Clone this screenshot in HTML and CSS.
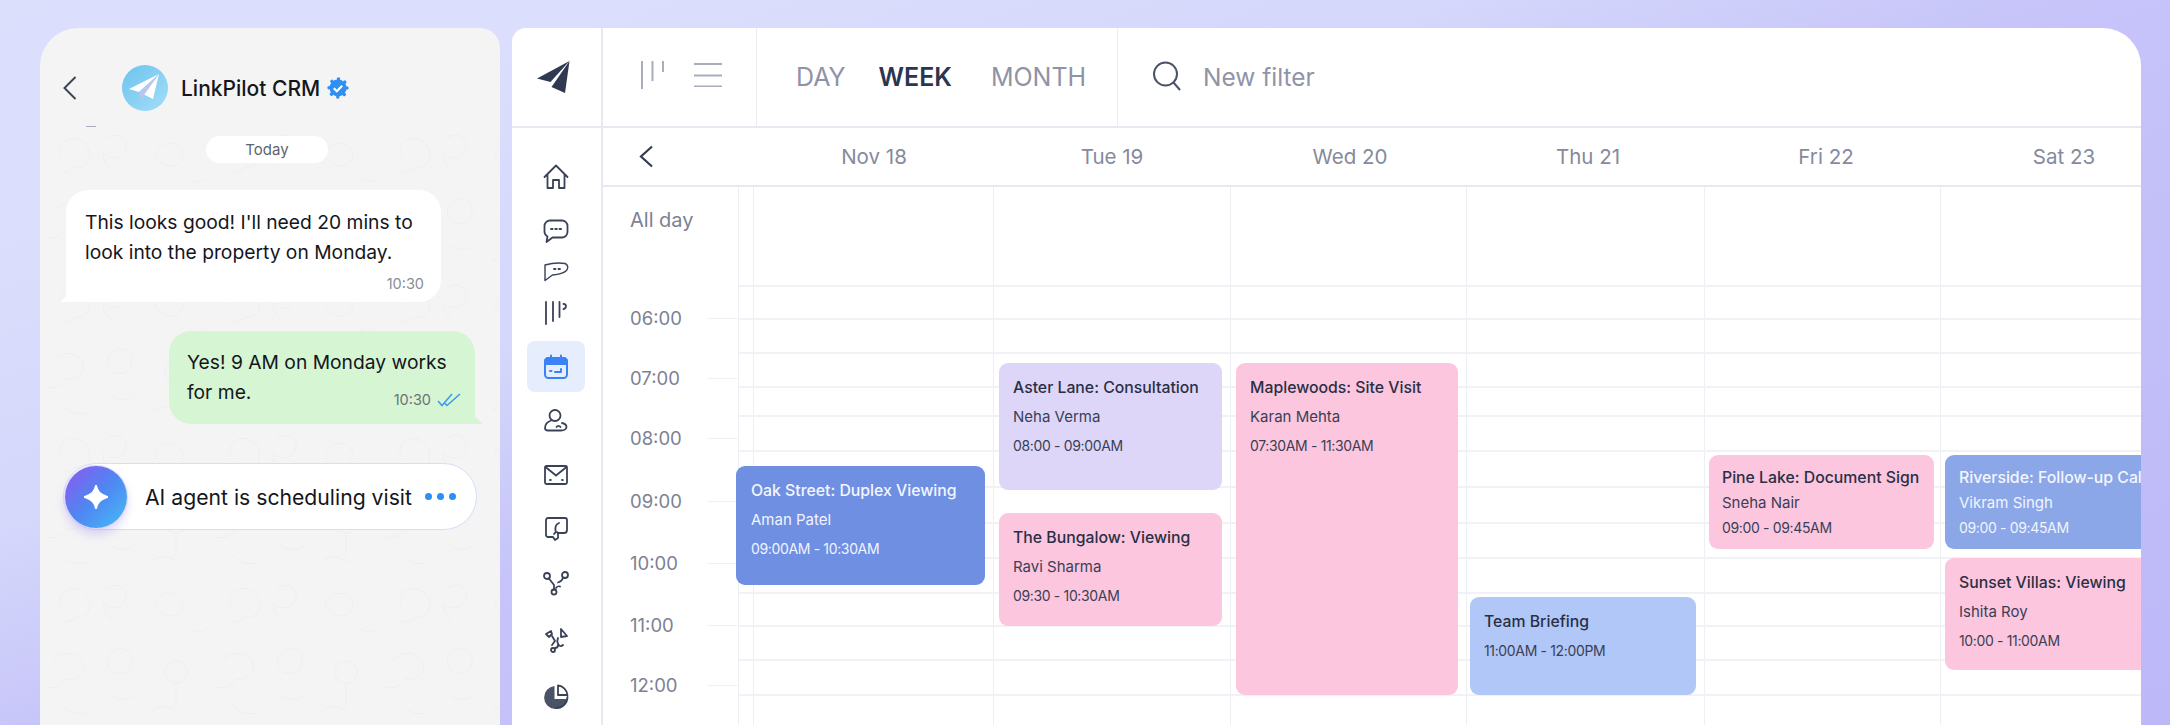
FILE: index.html
```html
<!DOCTYPE html>
<html lang="en">
<head>
    <meta charset="UTF-8">
    <meta name="viewport" content="width=device-width, initial-scale=1.0">
    <title>LinkPilot CRM Calendar</title>
    <link rel="stylesheet" href="styles.css">
</head>
<body>
    <div class="page">
        <!-- chat panel -->
        <section class="chat">
            <svg class="doodles" width="460" height="598" aria-hidden="true">
                <defs>
                    <pattern id="doodle" width="170" height="150" patternUnits="userSpaceOnUse">
                        <g fill="none" stroke="#eeeef0" stroke-width="1">
                            <path d="M22 30c-8-12 8-24 20-16s10 26-4 26c-6 0-10 8-16 4"/>
                            <path d="M66 12c10-8 22-2 20 9s-16 13-22 5c-2 6 2 14 8 16"/>
                            <path d="M118 22c6-8 20-8 24 2s-8 18-16 14-14-8-8-16zM150 52c6 4 12 4 16 0"/>
                            <path d="M12 84c8-10 24-10 30 0s-4 20-16 18c-6 8-12 10-20 8"/>
                            <path d="M74 74c8-6 20 0 18 10s-6 14-16 12-12-16-2-22zM70 118c8 6 18 6 24 0"/>
                            <path d="M126 90c4-8 16-8 20 0s-2 16-10 16-14-8-10-16zM136 106v22"/>
                            <path d="M22 128c8 8 14 10 24 8M112 134c8-6 18-6 26 2"/>
                        </g>
                    </pattern>
                </defs>
                <rect width="460" height="598" fill="url(#doodle)"/>
            </svg>

            <header class="chat-head">
                <svg class="chat-back" width="14" height="24" viewBox="0 0 14 24"><path d="M12.500 1L1.500 12l11 11" fill="none" stroke="#3d4456" stroke-width="2"/></svg>
                <svg class="avatar" width="46" height="46" viewBox="0 0 46 46">
                    <defs>
                        <linearGradient id="av" x1="0" y1="0" x2="1" y2="1">
                            <stop offset="0" stop-color="#6cc3ee"/>
                            <stop offset="1" stop-color="#a4def8"/>
                        </linearGradient>
                    </defs>
                    <circle cx="23" cy="23" r="23" fill="url(#av)"/>
                    <path d="M37 9L7 24l10 3z" fill="#fff"/>
                    <path d="M37 9L21 29l10 5z" fill="#fff"/>
                    <path d="M37 9L17 27l3 9 2-6z" fill="#b9c6ee"/>
                </svg>
                <span class="chat-name">LinkPilot CRM</span>
                <svg class="verified" width="22" height="22" viewBox="0 0 22 22">
                    <circle cx="11" cy="11" r="8.500" fill="#2e90f5"/>
                    <circle cx="11" cy="11" r="9" fill="none" stroke="#2e90f5" stroke-width="3.400" stroke-linecap="round" stroke-dasharray="0.1 7"/>
                    <path d="M6.800 11.300l3 3 5.400-5.600" fill="none" stroke="#fff" stroke-width="2.200"/>
                </svg>
            </header>

            <div class="messages">
                <div class="today">Today</div>

                <div class="bubble in">
                    <p>This looks good! I'll need 20 mins to look into the property on Monday.</p>
                    <div class="stamp">10:30</div>
                </div>

                <div class="bubble out">
                    <p>Yes! 9 AM on Monday works for me.</p>
                    <div class="stamp">
                        10:30
                        <svg width="24" height="14" viewBox="0 0 24 14"><path d="M1 8l4 4.500L15 1M8 10.500l2 2L23 1" fill="none" stroke="#3d9bf0" stroke-width="1.600"/></svg>
                    </div>
                </div>

                <div class="agent">
                    <div class="agent-orb">
                        <svg width="24" height="24" viewBox="0 0 24 24"><path d="M12 0c1.500 6.500 4 9.500 12 12-8 2.500-10.500 5.500-12 12-1.500-6.500-4-9.500-12-12 8-2.500 10.500-5.500 12-12z" fill="#fff" stroke="#fff" stroke-width="1.500" stroke-linejoin="round"/></svg>
                    </div>
                    <span class="agent-text">AI agent is scheduling visit</span>
                    <div class="dots"><i></i><i></i><i></i></div>
                </div>
            </div>
        </section>

        <!-- calendar panel -->
        <section class="main">
            <aside class="rail">
                <div class="logo">
                    <svg width="33" height="32" viewBox="0 0 33 32"><path d="M32.500 0L0 17.500l13.500 3.500z" fill="#2f3a52"/><path d="M32.500 0L14.500 26l13.500 6z" fill="#2f3a52"/></svg>
                </div>
                <nav class="nav">
                    <a class="nav-item">
                        <svg width="26" height="26" viewBox="0 0 26 26"><path d="M1.500 13L13 1.500 24.500 13M4.500 10.500V24H10v-8h6v8h5.500V10.500"/></svg>
                    </a>
                    <a class="nav-item">
                        <svg width="26" height="26" viewBox="0 0 26 26"><path d="M7 2.500h12a5.500 5.500 0 0 1 5.500 5.500v6a5.500 5.500 0 0 1-5.500 5.500H9.500L3.500 24l1-5.500A5.500 5.500 0 0 1 1.500 14V8A5.500 5.500 0 0 1 7 2.500z"/><path class="dot" d="M8 11h1.600M12.300 11h1.600M16.500 11h1.600"/></svg>
                    </a>
                    <a class="nav-item short">
                        <svg width="26" height="20" viewBox="0 0 26 20"><path class="thin" d="M2 3c7-2 14-2.500 20-1.500 3 1 3.500 4.500 1.500 7-3 3-9 4-14 4.500L2 18.500z"/><path class="dot" d="M11 7h1.500M15.500 7H17"/></svg>
                    </a>
                    <a class="nav-item">
                        <svg width="26" height="26" viewBox="0 0 26 26"><path d="M3 2v22M10 2v19M16.500 2v15M20.500 4c3-.5 3.500 4.500 0 5"/></svg>
                    </a>
                    <a class="nav-item active">
                        <svg width="26" height="26" viewBox="0 0 26 26"><rect x="2" y="4" width="22" height="20" rx="3.500"/><path class="band" d="M2 7.500A3.500 3.500 0 0 1 5.500 4h15A3.500 3.500 0 0 1 24 7.500V10H2z"/><path d="M8 1.500V5M18 1.500V5"/><path class="dot" d="M7 17h1.500M12 18h6v-3"/></svg>
                    </a>
                    <a class="nav-item">
                        <svg width="26" height="26" viewBox="0 0 26 26"><circle cx="12" cy="7.500" r="5.500"/><path d="M8 12.500C4 14 2 17 2 20c0 1.500 1 2.500 3 2.500h13c3 0 5.500-1.500 5.500-3.500s-2-3.500-4.500-4"/><path class="dot" d="M13.500 19c1-1.500 3-1.500 4 0"/></svg>
                    </a>
                    <a class="nav-item">
                        <svg width="26" height="26" viewBox="0 0 26 26"><rect x="2" y="4" width="22" height="18" rx="1.500"/><path d="M2.500 5L13 13.500 23.500 5"/><path class="dot" d="M7 18h.8M19 18h.8"/></svg>
                    </a>
                    <a class="nav-item">
                        <svg width="26" height="26" viewBox="0 0 26 26"><path d="M5 2h17a2 2 0 0 1 2 2v10c0 2-1 3-3 3h-6v5l-3 2-2-3H5a2 2 0 0 1-2-2V4a2 2 0 0 1 2-2z"/><path d="M16 7c-3 1-4 4-3.500 8M11 18c1.500-2 3-2.500 4-1"/></svg>
                    </a>
                    <a class="nav-item">
                        <svg width="26" height="26" viewBox="0 0 26 26"><circle cx="4" cy="6" r="3"/><circle cx="22" cy="5" r="3"/><circle cx="11" cy="22" r="2.500"/><path d="M6 8.500l5 6.500v4.500M20 8c-1 3-3 4-5 4.500M13 18c1-1.500 3-2 4-1.500"/></svg>
                    </a>
                    <a class="nav-item pushed">
                        <svg width="26" height="26" viewBox="0 0 26 26"><path d="M3 7l5-3 1 3-3 3zM18 2l6 7-6 1z"/><circle cx="10" cy="23" r="2"/><path d="M9 9l3 5-3 4M15 11c-1 2-1 4 0 6s3 3 5 1M12 21c2 0 3-1 3-3"/></svg>
                    </a>
                    <a class="nav-item pushed">
                        <svg width="26" height="26" viewBox="0 0 26 26"><path class="pie" d="M11.500 2A11.500 11.500 0 1 0 24 15H11.500z"/><path d="M15 1.500c5 .5 9 4.500 9.500 9.500H15zM24.500 13c0 6-5 11-11 11"/></svg>
                    </a>
                </nav>
            </aside>

            <div class="content">
                <div class="topbar">
                    <div class="view-toggle">
                        <svg width="24" height="28" viewBox="0 0 24 28"><path d="M2 0v28M12.500 0v20M23 0v11"/></svg>
                        <svg width="28" height="24" viewBox="0 0 28 24"><path d="M0 1h28M0 12.500h28M0 23.500h28"/></svg>
                    </div>
                    <div class="tabs">
                        <span>DAY</span>
                        <span class="current">WEEK</span>
                        <span>MONTH</span>
                    </div>
                    <div class="filter">
                        <svg width="30" height="30" viewBox="0 0 30 30"><circle cx="13.500" cy="13" r="11.500"/><path d="M21.500 21.500L28 29"/></svg>
                        <span>New filter</span>
                    </div>
                </div>

                <div class="days">
                    <div class="days-back">
                        <svg width="15" height="23" viewBox="0 0 15 23"><path d="M13 1.500L2 11.500l11 10" fill="none" stroke="#333c52" stroke-width="2.200"/></svg>
                    </div>
                    <div>Nov 18</div>
                    <div>Tue 19</div>
                    <div>Wed 20</div>
                    <div>Thu 21</div>
                    <div>Fri 22</div>
                    <div>Sat 23</div>
                </div>

                <div class="cal">
                    <div class="times">
                        <div class="time allday">All day</div>
                        <div class="time tick">06:00</div>
                        <div class="time tick">07:00</div>
                        <div class="time tick">08:00</div>
                        <div class="time tick">09:00</div>
                        <div class="time tick">10:00</div>
                        <div class="time tick">11:00</div>
                        <div class="time tick">12:00</div>
                    </div>

                    <div class="board">
                        <div class="cols">
                            <div class="col c0"></div>
                            <div class="col c1"></div>
                            <div class="col c2"></div>
                            <div class="col c3"></div>
                            <div class="col c4"></div>
                            <div class="col c5"></div>
                            <div class="col"></div>
                        </div>
                        <div class="rows">
                            <div></div><div></div><div></div><div></div><div></div><div></div><div></div>
                            <div></div><div></div><div></div><div></div><div></div><div></div><div></div>
                        </div>

                        <div class="event blue oak">
                            <h4>Oak Street: Duplex Viewing</h4>
                            <p>Aman Patel</p>
                            <p>09:00AM - 10:30AM</p>
                        </div>
                        <div class="event lilac aster">
                            <h4>Aster Lane: Consultation</h4>
                            <p>Neha Verma</p>
                            <p>08:00 - 09:00AM</p>
                        </div>
                        <div class="event pink bungalow">
                            <h4>The Bungalow: Viewing</h4>
                            <p>Ravi Sharma</p>
                            <p>09:30 - 10:30AM</p>
                        </div>
                        <div class="event pink maple">
                            <h4>Maplewoods: Site Visit</h4>
                            <p>Karan Mehta</p>
                            <p>07:30AM - 11:30AM</p>
                        </div>
                        <div class="event sky team">
                            <h4>Team Briefing</h4>
                            <p>11:00AM - 12:00PM</p>
                        </div>
                        <div class="event pink pine compact">
                            <h4>Pine Lake: Document Sign</h4>
                            <p>Sneha Nair</p>
                            <p>09:00 - 09:45AM</p>
                        </div>
                        <div class="event steel river compact">
                            <h4>Riverside: Follow-up Call</h4>
                            <p>Vikram Singh</p>
                            <p>09:00 - 09:45AM</p>
                        </div>
                        <div class="event pink sunset">
                            <h4>Sunset Villas: Viewing</h4>
                            <p>Ishita Roy</p>
                            <p>10:00 - 11:00AM</p>
                        </div>
                    </div>
                </div>
            </div>
        </section>
    </div>
</body>
</html>
```

FILE: styles.css
```css
* {
    box-sizing: border-box;
}
html, body {
    margin: 0;
    height: 100%;
    overflow: hidden;
}
body {
    font-family: Inter, "Liberation Sans", sans-serif;
    color: #14161c;
    background: linear-gradient(160deg, #dcdffc 0%, #dbdefc 15%, #d5d7fb 35%, #c6c4f9 50%, #bdb8f8 100%);
}
p, h4 {
    margin: 0;
}
.page {
    display: flex;
    gap: 12px;
    height: 725px;
    padding: 28px 29px 0 40px;
}

/* chat */
.chat {
    position: relative;
    width: 460px;
    background: #f4f4f5;
    border-radius: 38px 20px 0 0;
    overflow: hidden;
}
.doodles {
    position: absolute;
    left: 0;
    top: 99px;
}
.chat-head {
    position: relative;
    display: flex;
    align-items: center;
    height: 120px;
    padding-left: 23px;
}
.chat-head::after {
    content: "";
    position: absolute;
    left: 46px;
    top: 98px;
    width: 10px;
    height: 1px;
    background: #a9adbb;
}
.chat-back {
    margin-right: 45px;
}
.avatar {
    margin-right: 13px;
}
.chat-name {
    font-size: 21px;
    font-weight: 500;
    margin-right: 7px;
}
.messages {
    position: relative;
    display: flex;
    flex-direction: column;
    margin-top: -12px;
}
.today {
    align-self: center;
    width: 122px;
    height: 27px;
    margin-left: -6px;
    border-radius: 14px;
    background: #fff;
    color: #5f6370;
    font-size: 15px;
    line-height: 27px;
    text-align: center;
}
.bubble {
    position: relative;
    font-size: 19.250px;
    line-height: 30px;
}
.bubble.in {
    width: 375px;
    height: 112px;
    margin: 27px 0 0 26px;
    padding: 17px 19px 0;
    background: #fff;
    border-radius: 22px 22px 22px 6px;
}
.bubble.in::before {
    content: "";
    position: absolute;
    left: -6px;
    bottom: 0;
    width: 14px;
    height: 12px;
    background: #fff;
    clip-path: polygon(100% 0, 100% 100%, 0 100%);
}
.bubble.out {
    align-self: flex-start;
    width: 306px;
    height: 93px;
    margin: 29px 0 0 129px;
    padding: 16px 18px 0;
    background: #d6f5d3;
    border-radius: 22px 22px 6px 22px;
}
.bubble.out::after {
    content: "";
    position: absolute;
    right: -8px;
    bottom: 0;
    width: 14px;
    height: 12px;
    background: #d6f5d3;
    clip-path: polygon(0 0, 100% 100%, 0 100%);
}
.stamp {
    position: absolute;
    right: 17px;
    bottom: 8px;
    display: flex;
    align-items: center;
    gap: 6px;
    color: #8a8d98;
    font-size: 14.500px;
    line-height: 20px;
}
.bubble.out .stamp {
    right: 14px;
    bottom: 14px;
    color: #6b7278;
}
.agent {
    display: flex;
    align-items: center;
    width: 414px;
    height: 67px;
    margin: 39px 0 0 23px;
    padding-left: 1px;
    background: #fff;
    border: 1px solid #d3dffa;
    border-radius: 34px;
}
.agent-orb {
    display: flex;
    align-items: center;
    justify-content: center;
    width: 62px;
    height: 62px;
    margin-right: 18px;
    border-radius: 50%;
    background: linear-gradient(135deg, #8f57ee 0%, #4f86f2 50%, #45bdf5 100%);
    box-shadow: 0 0 0 1px #e2d6fb, 0 6px 10px rgba(120, 90, 230, .25);
}
.agent-text {
    font-size: 21.200px;
    margin-right: 13px;
}
.dots {
    display: flex;
    gap: 5px;
}
.dots i {
    width: 7px;
    height: 7px;
    border-radius: 50%;
    background: #2a8ff7;
}

/* calendar */
.main {
    display: flex;
    width: 1629px;
    background: #fff;
    border-radius: 14px 38px 0 0;
    overflow: hidden;
}
.rail {
    flex: none;
    width: 91px;
    border-right: 2px solid #e8e9f0;
}
.logo {
    display: flex;
    align-items: center;
    justify-content: center;
    height: 100px;
    padding-right: 6px;
    border-bottom: 2px solid #e8e9f0;
}
.nav {
    display: flex;
    flex-direction: column;
    align-items: center;
    padding: 22px 2px 0 0;
}
.nav-item {
    display: flex;
    align-items: center;
    justify-content: center;
    flex: none;
    width: 58px;
    height: 54px;
    border-radius: 8px;
}
.nav-item.short {
    height: 28px;
}
.nav-item.pushed {
    margin-top: 3px;
}
.nav-item svg {
    fill: none;
    stroke: #3a4256;
    stroke-width: 1.800;
    stroke-linecap: round;
    stroke-linejoin: round;
}
.nav-item svg .thin {
    stroke-width: 1.400;
}
.nav-item svg .pie {
    fill: #4a5268;
    stroke: none;
}
.nav-item.active {
    height: 51px;
    margin: 1px 0 2px;
    background: #e6edfd;
}
.nav-item.active svg {
    stroke: #3b82f6;
    stroke-width: 2;
}
.nav-item.active svg .band {
    fill: #3b82f6;
}
.content {
    flex: 1;
    min-width: 0;
}
.topbar {
    display: flex;
    height: 100px;
    border-bottom: 2px solid #e8e9f0;
}
.view-toggle {
    display: flex;
    align-items: center;
    gap: 30px;
    width: 154px;
    padding: 0 0 5px 37px;
    border-right: 1px solid #ecedf2;
}
.view-toggle svg {
    fill: none;
    stroke: #a9adbb;
    stroke-width: 2;
}
.tabs {
    display: flex;
    align-items: center;
    gap: 37px;
    width: 361px;
    padding-left: 39px;
    border-right: 1px solid #ecedf2;
    color: #8f93a5;
    font-size: 25px;
}
.tabs .current {
    margin: 0 2px 0 -4px;
    color: #2b3550;
    font-weight: 600;
}
.filter {
    display: flex;
    align-items: center;
    gap: 21px;
    padding-left: 34px;
    color: #9094a6;
    font-size: 24.500px;
}
.filter svg {
    fill: none;
    stroke: #4b5166;
    stroke-width: 2;
    margin-bottom: 3px;
}
.days {
    display: grid;
    grid-template-columns: 152px repeat(6, 238px);
    align-items: center;
    height: 59px;
    border-bottom: 2px solid #e8e9f0;
    color: #858a9c;
    font-size: 20.500px;
    text-align: center;
}
.days-back {
    padding-left: 36px;
    text-align: left;
    line-height: 0;
}
.cal {
    display: flex;
    height: 538px;
}
.times {
    flex: none;
    display: grid;
    grid-template-rows: 101px 60px 60px 60px 66px 58px 66px 54px;
    width: 135px;
    color: #7c8194;
    font-size: 18.500px;
}
.time {
    position: relative;
    display: flex;
    align-items: center;
    padding-left: 27px;
}
.time.allday {
    padding-bottom: 35px;
    font-size: 20px;
}
.time.tick::after {
    content: "";
    position: absolute;
    right: 0;
    top: 50%;
    width: 31px;
    height: 1px;
    background: #f0f1f5;
}
.board {
    position: relative;
    flex: 1;
    border-left: 1px solid #eeeff4;
}
.cols {
    display: flex;
    height: 100%;
}
.col {
    flex: 1;
    border-left: 1px solid #eeeff4;
}
.col.c0 {
    flex: none;
    width: 14px;
    border-left: 0;
}
.col.c1 {
    flex: none;
    width: 240px;
}
.col.c2 {
    flex: none;
    width: 237px;
}
.col.c3 {
    flex: none;
    width: 236px;
}
.col.c4 {
    flex: none;
    width: 238px;
}
.col.c5 {
    flex: none;
    width: 236px;
}
.rows {
    position: absolute;
    inset: 0;
    display: grid;
    grid-template-rows: 98px 33px 34px 34px 29px 35px 36px 36px 35px 35px 33px 34px 35px 1fr;
}
.rows div {
    border-top: 2px solid #f1f2f6;
}
.rows div:first-child {
    border-top: 0;
}

/* events */
.event {
    position: absolute;
    display: flex;
    flex-direction: column;
    gap: 9px;
    padding: 15px 14px 0;
    border-radius: 9px;
    color: #3a3f55;
    font-size: 15px;
    line-height: 20px;
    white-space: nowrap;
    overflow: hidden;
}
.event h4 {
    color: #2a2f45;
    font-size: 15.800px;
    font-weight: 500;
}
.event p:last-child {
    font-size: 14px;
    letter-spacing: -0.35px;
}
.event.compact {
    gap: 5px;
    padding-top: 13px;
}
.blue {
    background: #6f8fe3;
    color: #f1f4ff;
}
.blue h4, .steel h4 {
    color: #f4f6ff;
}
.steel {
    background: #8ba7e8;
    color: #f1f4ff;
}
.sky {
    background: #b0c7f8;
}
.lilac {
    background: #ddd6f9;
}
.pink {
    background: #fcc6de;
}
.oak {
    left: -3px;
    top: 279px;
    width: 249px;
    height: 119px;
    padding-left: 15px;
}
.aster {
    left: 260px;
    top: 176px;
    width: 223px;
    height: 127px;
}
.bungalow {
    left: 260px;
    top: 326px;
    width: 223px;
    height: 113px;
}
.maple {
    left: 497px;
    top: 176px;
    width: 222px;
    height: 332px;
}
.team {
    left: 731px;
    top: 410px;
    width: 226px;
    height: 98px;
}
.pine {
    left: 970px;
    top: 268px;
    width: 225px;
    height: 94px;
    padding-left: 13px;
}
.river {
    left: 1206px;
    top: 268px;
    width: 225px;
    height: 94px;
}
.sunset {
    left: 1206px;
    top: 371px;
    width: 225px;
    height: 112px;
}
```
